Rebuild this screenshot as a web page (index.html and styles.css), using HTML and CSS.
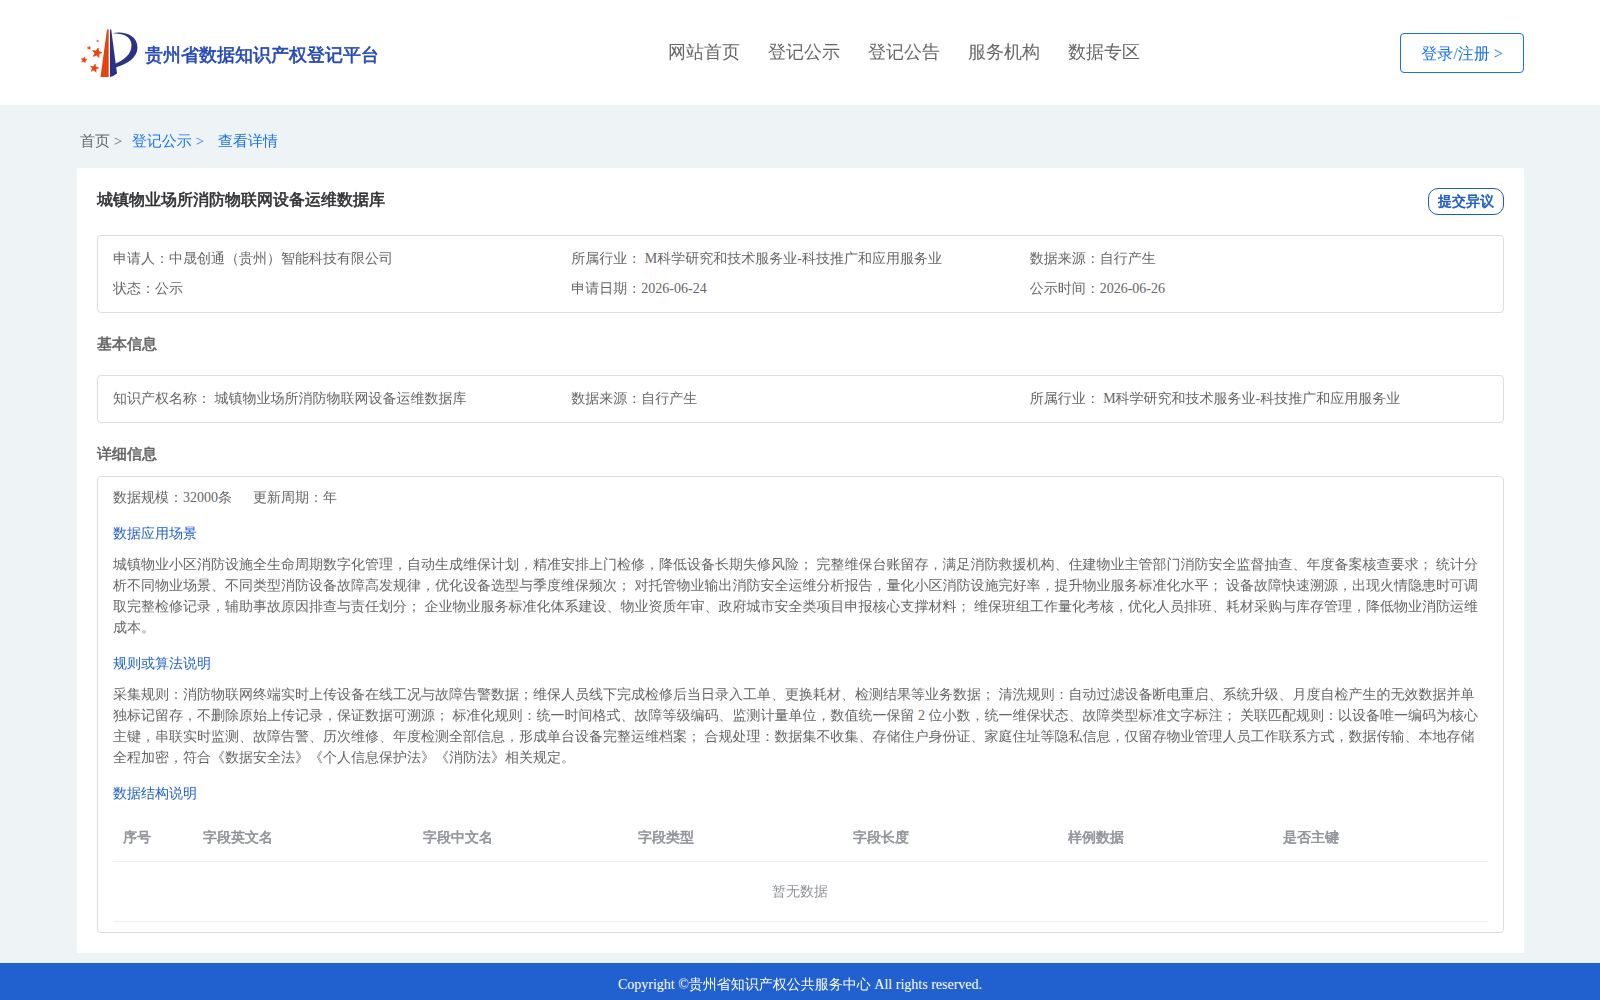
FILE: index.html
```html
<!DOCTYPE html>
<html lang="zh-CN">
<head>
<meta charset="utf-8">
<title>贵州省数据知识产权登记平台</title>
<link rel="stylesheet" href="styles.css">
</head>
<body>
<header class="header">
  <div class="header-inner">
    <div class="brand">
      <svg class="logo" width="60" height="52" viewBox="0 0 60 52">
        <path fill="#e8430f" d="M27 2.500h1.700V50H20.500z"/>
        <path fill="#2a3285" d="M30 2.500h1.200L37 46.500Q33.500 49.300 30 50z"/>
        <path fill="#2a3285" d="M32 6.200C44 3.500 57.500 8 57.500 20.500 57.500 30.500 47.500 37 35.500 40.500L34.500 37C44 33 51.500 27.500 51.500 18 51.500 9.500 43 6 32 6.200z"/>
        <g fill="#e8430f" stroke="#e8430f" stroke-width=".15">
          <path transform="translate(17 26) rotate(12) scale(5)" d="M0-1 .26-.34.95-.31.4.13.59.81 0 .42-.59.81-.4.13-.95-.31-.26-.34z"/>
          <path transform="translate(14.300 41.300) rotate(12) scale(4.300)" d="M0-1 .26-.34.95-.31.4.13.59.81 0 .42-.59.81-.4.13-.95-.31-.26-.34z"/>
          <path transform="translate(4 33) rotate(12) scale(3.200)" d="M0-1 .26-.34.95-.31.4.13.59.81 0 .42-.59.81-.4.13-.95-.31-.26-.34z"/>
          <path transform="translate(9 21) rotate(12) scale(2)" d="M0-1 .26-.34.95-.31.4.13.59.81 0 .42-.59.81-.4.13-.95-.31-.26-.34z"/>
          <path transform="translate(17.700 14) rotate(12) scale(1.300)" d="M0-1 .26-.34.95-.31.4.13.59.81 0 .42-.59.81-.4.13-.95-.31-.26-.34z"/>
        </g>
      </svg>
      <span class="brand-name">贵州省数据知识产权登记平台</span>
    </div>
    <nav class="nav">
      <a>网站首页</a><a>登记公示</a><a>登记公告</a><a>服务机构</a><a>数据专区</a>
    </nav>
    <a class="login">登录/注册 &gt;</a>
  </div>
</header>
<main class="main">
  <div class="crumbs"><span class="crumb-home">首页 &gt;</span><span class="crumb-list">登记公示 &gt;</span><span>查看详情</span></div>
  <section class="card">
    <div class="title-row"><h1>城镇物业场所消防物联网设备运维数据库</h1><a class="objection">提交异议</a></div>
    <div class="box grid">
      <div>申请人：中晟创通（贵州）智能科技有限公司</div><div>所属行业： M科学研究和技术服务业-科技推广和应用服务业</div><div>数据来源：自行产生</div>
      <div>状态：公示</div><div>申请日期：2026-06-24</div><div>公示时间：2026-06-26</div>
    </div>
    <h2 class="basic-title">基本信息</h2>
    <div class="box grid">
      <div>知识产权名称： 城镇物业场所消防物联网设备运维数据库</div><div>数据来源：自行产生</div><div>所属行业： M科学研究和技术服务业-科技推广和应用服务业</div>
    </div>
    <h2 class="detail-title">详细信息</h2>
    <div class="box detail">
      <div class="scale"><span>数据规模：32000条</span><span>更新周期：年</span></div>
      <h3>数据应用场景</h3>
      <p>城镇物业小区消防设施全生命周期数字化管理，自动生成维保计划，精准安排上门检修，降低设备长期失修风险； 完整维保台账留存，满足消防救援机构、住建物业主管部门消防安全监督抽查、年度备案核查要求； 统计分析不同物业场景、不同类型消防设备故障高发规律，优化设备选型与季度维保频次； 对托管物业输出消防安全运维分析报告，量化小区消防设施完好率，提升物业服务标准化水平； 设备故障快速溯源，出现火情隐患时可调取完整检修记录，辅助事故原因排查与责任划分； 企业物业服务标准化体系建设、物业资质年审、政府城市安全类项目申报核心支撑材料； 维保班组工作量化考核，优化人员排班、耗材采购与库存管理，降低物业消防运维成本。</p>
      <h3>规则或算法说明</h3>
      <p>采集规则：消防物联网终端实时上传设备在线工况与故障告警数据；维保人员线下完成检修后当日录入工单、更换耗材、检测结果等业务数据； 清洗规则：自动过滤设备断电重启、系统升级、月度自检产生的无效数据并单独标记留存，不删除原始上传记录，保证数据可溯源； 标准化规则：统一时间格式、故障等级编码、监测计量单位，数值统一保留 2 位小数，统一维保状态、故障类型标准文字标注； 关联匹配规则：以设备唯一编码为核心主键，串联实时监测、故障告警、历次维修、年度检测全部信息，形成单台设备完整运维档案； 合规处理：数据集不收集、存储住户身份证、家庭住址等隐私信息，仅留存物业管理人员工作联系方式，数据传输、本地存储全程加密，符合《数据安全法》《个人信息保护法》《消防法》相关规定。</p>
      <h3>数据结构说明</h3>
      <table>
        <colgroup><col class="col-index"><col class="col-name"><col><col><col><col><col></colgroup>
        <thead><tr><th>序号</th><th>字段英文名</th><th>字段中文名</th><th>字段类型</th><th>字段长度</th><th>样例数据</th><th>是否主键</th></tr></thead>
        <tbody><tr><td colspan="7">暂无数据</td></tr></tbody>
      </table>
    </div>
  </section>
</main>
<footer class="footer">Copyright ©贵州省知识产权公共服务中心 All rights reserved.</footer>
</body>
</html>
```
FILE: styles.css
```css
* { box-sizing: border-box; }
html, body { height: 100%; }
body {
  margin: 0;
  overflow: hidden;
  background: #eef3f6;
  color: #666;
  font: 14px/21px "Liberation Serif", "Droid Sans Fallback", "WenQuanYi Zen Hei", "Noto Sans CJK SC", serif;
  text-spacing-trim: space-all;
}
h1, h2, h3, p { margin: 0; }
/* The CJK face has a single weight, so headings are thickened with a stroke. */
h1, h2, th, .brand-name, .objection { font-weight: normal; -webkit-text-stroke: 0.6px currentColor; }
.header { height: 105px; background: #fff; }
.header-inner {
  display: grid;
  grid-template-columns: 1fr auto 1fr;
  width: 1447px;
  height: 105px;
  margin: 0 auto 0 77px;
  align-items: center;
}
.brand { display: flex; align-items: center; gap: 5px; padding-left: 3px; }
.brand-name { color: #2448b5; font-size: 18px; padding-top: 6px; }
.nav { display: flex; gap: 28px; font-size: 18px; padding: 0 0 1px 207px; }
.login {
  justify-self: end;
  width: 124px;
  height: 40px;
  border: 1px solid #1a6fea;
  border-radius: 4px;
  color: #1a73ee;
  font-size: 16px;
  line-height: 40px;
  text-align: center;
}
.main { width: 1447px; margin-left: 77px; }
.crumbs {
  display: flex;
  height: 63px;
  padding: 26px 0 0 3px;
  color: #1a73ee;
  font-size: 15px;
}
.crumb-home { color: #666; margin-right: 9.5px; }
.crumb-list { margin-right: 14px; }
.card { height: 785px; padding: 20px; background: #fff; }
.title-row { display: flex; justify-content: space-between; height: 47px; }
h1 { color: #303133; font-size: 16px; line-height: 24px; }
.objection {
  width: 76px;
  height: 27px;
  border: 1px solid #1d5bc4;
  border-radius: 10px;
  color: #1d5bc4;
  line-height: 26px;
  text-align: center;
}
.box { border: 1px solid #ddd; border-radius: 4px; padding: 8px 15px; }
.grid { display: grid; grid-template-columns: repeat(3, 1fr); line-height: 30px; }
h2 { font-size: 15px; }
.basic-title { height: 62px; padding-top: 21px; }
.detail-title { height: 53px; padding-top: 21px; }
.detail { height: 457px; padding: 10px 15px; }
.scale { display: flex; gap: 21px; }
h3 { color: #2160cf; font-size: 14px; font-weight: normal; padding: 15px 0 10px; }
table { width: 100%; border-collapse: separate; border-spacing: 0; table-layout: fixed; color: #909399; }
.col-index { width: 80px; }
.col-name { width: 220px; }
th { height: 48px; padding: 0 10px; text-align: left; border-bottom: 1px solid #ebeef5; }
td { height: 60px; padding: 0 1px 0 0; text-align: center; border-bottom: 1px solid #ebeef5; }
.footer { height: 37px; margin-top: 10px; padding-top: 11px; background: #2160cf; color: #fff; text-align: center; }
```
